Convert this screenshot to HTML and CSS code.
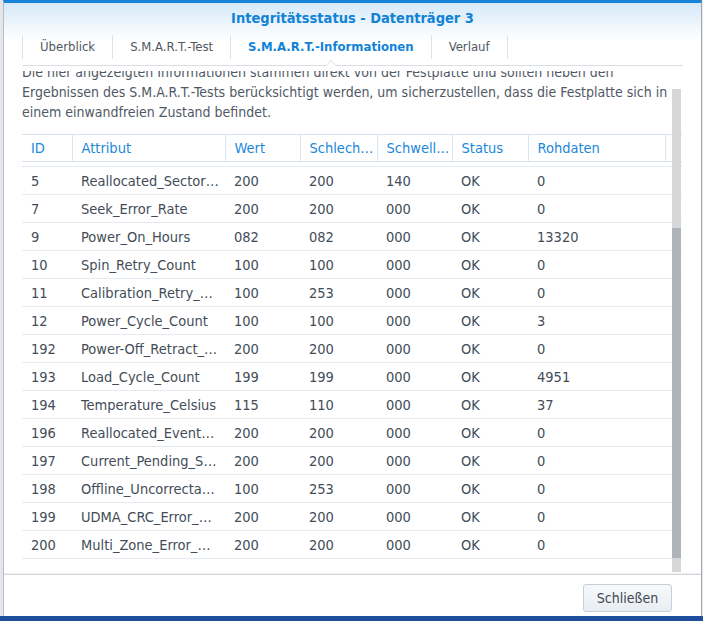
FILE: index.html
```html
<!DOCTYPE html>
<html lang="de">
<head>
  <meta charset="UTF-8">
  <meta name="viewport" content="width=device-width, initial-scale=1.0">
  <title>Integritätsstatus - Datenträger 3</title>
  <link rel="stylesheet" href="styles.css">
</head>
<body>
  <div class="desktop">
    <div class="window">
      <div class="win-head">
        <div class="win-title">Integritätsstatus - Datenträger 3</div>
        <div class="tabs">
          <div class="tab">Überblick</div>
          <div class="tab">S.M.A.R.T.-Test</div>
          <div class="tab active">S.M.A.R.T.-Informationen</div>
          <div class="tab">Verlauf</div>
        </div>
      </div>

      <div class="win-body">
        <div class="scroll-content">
          <p class="intro">Die hier angezeigten Informationen stammen direkt von der Festplatte und sollten neben den Ergebnissen des S.M.A.R.T.-Tests berücksichtigt werden, um sicherzustellen, dass die Festplatte sich in einem einwandfreien Zustand befindet.</p>

          <table class="grid grid-head">
            <colgroup>
              <col class="c-id"><col class="c-attr"><col class="c-num"><col class="c-worst"><col class="c-num"><col class="c-status"><col class="c-raw"><col class="c-pad">
            </colgroup>
            <tr>
              <th>ID</th><th>Attribut</th><th>Wert</th><th>Schlechtester</th><th>Schwellenwert</th><th>Status</th><th>Rohdaten</th><th class="pad"></th>
            </tr>
          </table>

          <table class="grid grid-body">
            <colgroup>
              <col class="c-id"><col class="c-attr"><col class="c-num"><col class="c-worst"><col class="c-num"><col class="c-status"><col class="c-raw"><col class="c-pad">
            </colgroup>
            <tr><td>5</td><td>Reallocated_Sector_Ct</td><td>200</td><td>200</td><td>140</td><td>OK</td><td>0</td><td></td></tr>
            <tr><td>7</td><td>Seek_Error_Rate</td><td>200</td><td>200</td><td>000</td><td>OK</td><td>0</td><td></td></tr>
            <tr><td>9</td><td>Power_On_Hours</td><td>082</td><td>082</td><td>000</td><td>OK</td><td>13320</td><td></td></tr>
            <tr><td>10</td><td>Spin_Retry_Count</td><td>100</td><td>100</td><td>000</td><td>OK</td><td>0</td><td></td></tr>
            <tr><td>11</td><td>Calibration_Retry_Count</td><td>100</td><td>253</td><td>000</td><td>OK</td><td>0</td><td></td></tr>
            <tr><td>12</td><td>Power_Cycle_Count</td><td>100</td><td>100</td><td>000</td><td>OK</td><td>3</td><td></td></tr>
            <tr><td>192</td><td>Power-Off_Retract_Count</td><td>200</td><td>200</td><td>000</td><td>OK</td><td>0</td><td></td></tr>
            <tr><td>193</td><td>Load_Cycle_Count</td><td>199</td><td>199</td><td>000</td><td>OK</td><td>4951</td><td></td></tr>
            <tr><td>194</td><td>Temperature_Celsius</td><td>115</td><td>110</td><td>000</td><td>OK</td><td>37</td><td></td></tr>
            <tr><td>196</td><td>Reallocated_Event_Count</td><td>200</td><td>200</td><td>000</td><td>OK</td><td>0</td><td></td></tr>
            <tr><td>197</td><td>Current_Pending_Sector</td><td>200</td><td>200</td><td>000</td><td>OK</td><td>0</td><td></td></tr>
            <tr><td>198</td><td>Offline_Uncorrectable</td><td>100</td><td>253</td><td>000</td><td>OK</td><td>0</td><td></td></tr>
            <tr><td>199</td><td>UDMA_CRC_Error_Count</td><td>200</td><td>200</td><td>000</td><td>OK</td><td>0</td><td></td></tr>
            <tr><td>200</td><td>Multi_Zone_Error_Rate</td><td>200</td><td>200</td><td>000</td><td>OK</td><td>0</td><td></td></tr>
          </table>
        </div>

        <div class="scrollbar"><div class="thumb"></div></div>
      </div>

      <div class="win-foot">
        <button class="btn">Schließen</button>
      </div>
    </div>
    <div class="taskbar"></div>
  </div>
</body>
</html>
```

FILE: styles.css
```css
body {
  margin: 0;
  background-color: #e3e7eb;
  font-family: "DejaVu Sans", Verdana, sans-serif;
  font-stretch: condensed;
  font-size: 14.5px;
  color: #48525d;
  overflow: hidden;
}
.desktop {
  width: 703px;
  height: 621px;
  display: flex;
  flex-direction: column;
}
.window {
  margin-left: 3px;
  width: 699px;
  height: 616px;
  box-sizing: border-box;
  background-color: white;
  border-top: 3px solid #1784d9;
  border-left: 1px solid #b7bcc2;
  border-right: 1px solid #a3a8ae;
  display: flex;
  flex-direction: column;
}
.taskbar {
  flex: 1;
  background-color: #1d4f9e;
}

/* title + tab strip */
.win-head {
  background: linear-gradient(#d6e9f9, #ffffff 38px);
}
.win-title {
  height: 32px;
  line-height: 31px;
  text-align: center;
  font-weight: bold;
  font-size: 14.5px;
  color: #1183d6;
}
.tabs {
  display: flex;
  margin: 0 18px;
  height: 30px;
  font-size: 13px;
  border-bottom: 1px solid #d9dfe5;
}
.tab {
  position: relative;
  height: 24px;
  line-height: 24px;
  padding: 0 17px;
  border-left: 1px solid #dde3e9;
  color: #4e5863;
}
.tab:last-child {
  border-right: 1px solid #dde3e9;
}
.tab.active {
  font-weight: bold;
  color: #1183d6;
}
/* little caret under the selected tab */
.tab.active::before,
.tab.active::after {
  content: "";
  position: absolute;
  left: 50%;
  margin-left: -6px;
  border: 6px solid transparent;
  border-top: none;
}
.tab.active::before {
  top: 25px;
  border-bottom-color: #d9dfe5;
}
.tab.active::after {
  top: 26px;
  border-bottom-color: white;
}

/* scrolling content */
.win-body {
  position: relative;
  flex: 1;
  margin: 5px 18px 0;
  overflow: hidden;
}
.scroll-content {
  margin-top: -9px;
}
.intro {
  margin: 0 6px 12px 0;
  font-size: 14px;
  line-height: 20px;
  color: #4f5965;
}
.grid {
  width: 660px;
  table-layout: fixed;
  border-collapse: collapse;
}
.c-id { width: 50px; }
.c-attr { width: 153px; }
.c-num { width: 75px; }
.c-worst { width: 77px; }
.c-status { width: 76px; }
.c-raw { width: 137px; }
.c-pad { width: 17px; }
.grid th,
.grid td {
  padding: 0 6px 0 9px;
  white-space: nowrap;
  overflow: hidden;
  text-overflow: ellipsis;
  text-align: left;
}
.grid-head {
  border-top: 1px solid #d6e0ea;
  border-bottom: 1px solid #d6e0ea;
  margin-bottom: 4px;
}
.grid-head th {
  height: 26px;
  padding-right: 1px;
  font-weight: normal;
  color: #1a87d9;
  border-right: 1px solid #dde6ee;
}
.grid-head th.pad {
  border-right: none;
}
.grid-body {
  border-top: 1px solid #e4eaf0;
}
.grid-body td {
  height: 27px;
  border-bottom: 1px solid #e4eaf0;
  color: #434d58;
}

.scrollbar {
  position: absolute;
  top: 18px;
  right: 2px;
  bottom: 2px;
  width: 9px;
  background-color: #d6d7d9;
}
.thumb {
  margin-top: 139px;
  height: 330px;
  background-color: #b0b3b7;
}

/* footer */
.win-foot {
  display: flex;
  justify-content: flex-end;
  height: 42px;
  padding: 9px 29px 0 0;
  box-sizing: border-box;
  border-top: 1px solid #d3d6da;
  box-shadow: 0 -1px 0 #eceef0;
}
.btn {
  width: 89px;
  height: 28px;
  padding: 0;
  font-family: inherit;
  font-stretch: condensed;
  font-size: 14px;
  color: #3f4954;
  background: linear-gradient(#f6f8fa, #e9eef3);
  border: 1px solid #c6d0da;
  border-radius: 3px;
}
```
